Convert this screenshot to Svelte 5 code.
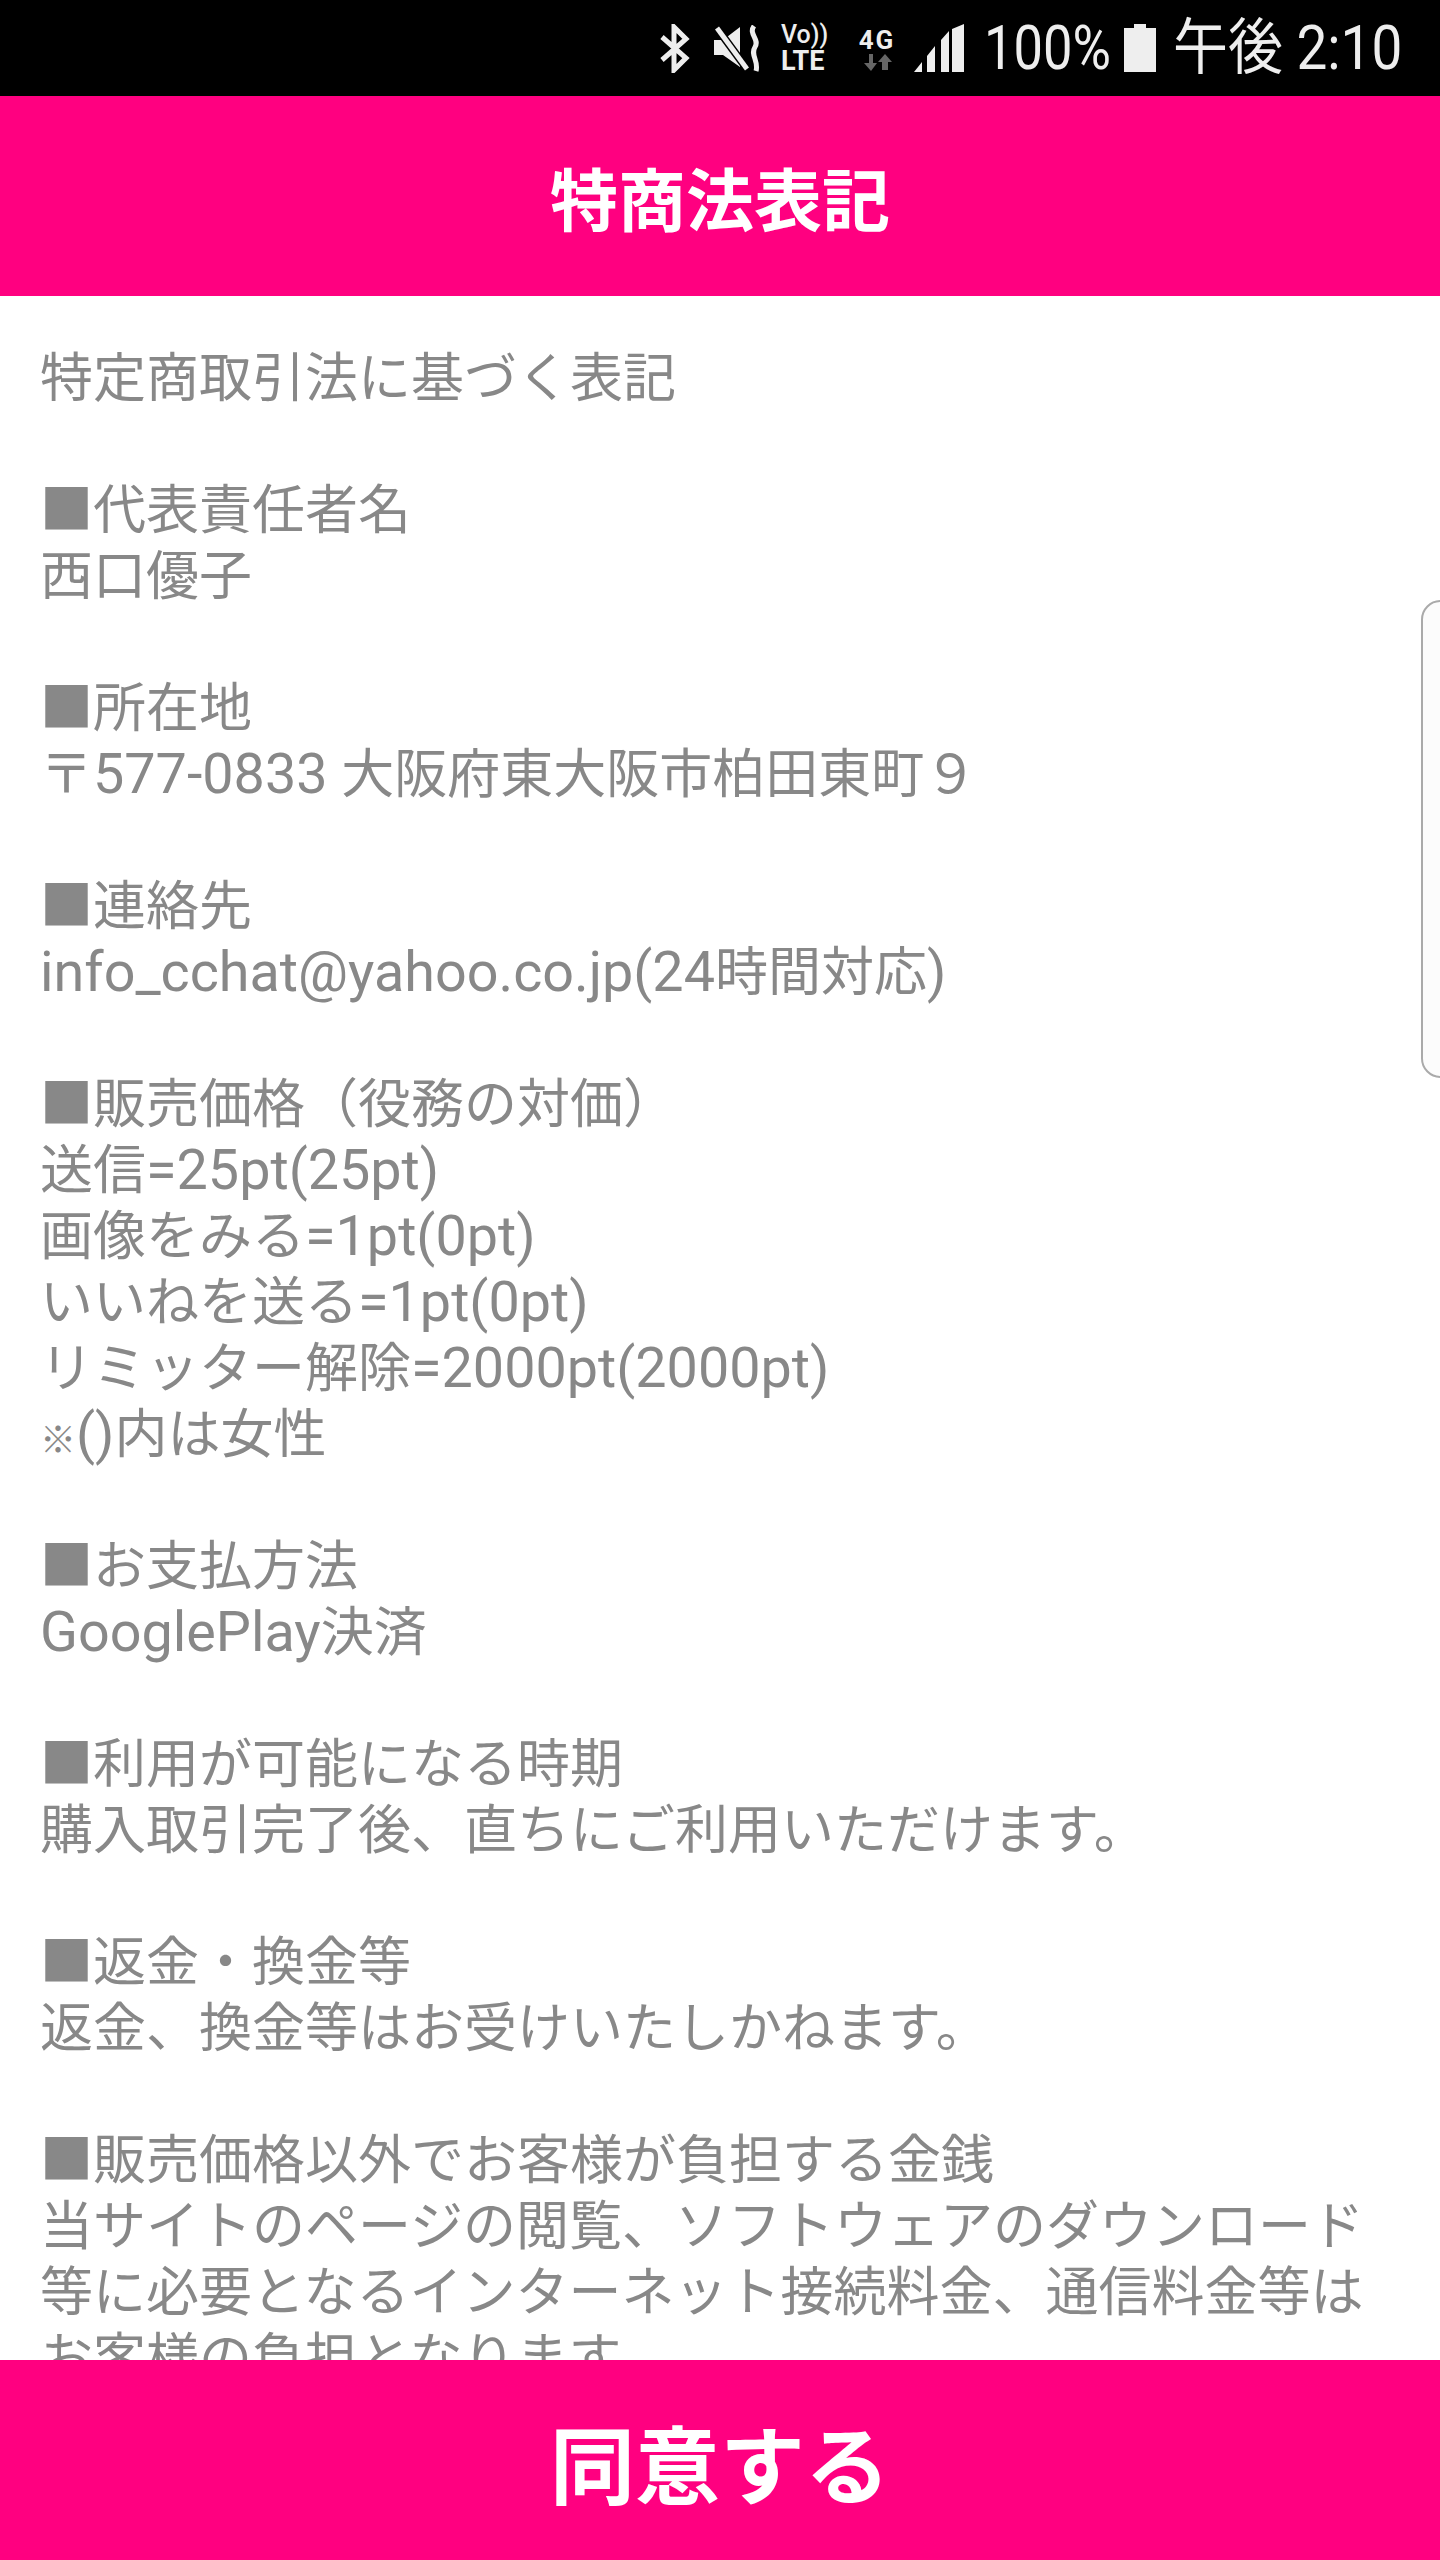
<script lang="ts">
	// 特商法表記 screen: status bar, title bar, scrolling legal text, agree button.
	const sections = [
		['特定商取引法に基づく表記'],
		['■代表責任者名', '西口優子'],
		['■所在地', '〒577-0833 大阪府東大阪市柏田東町９'],
		['■連絡先', 'info_cchat@yahoo.co.jp(24時間対応)'],
		['■販売価格（役務の対価）', '送信=25pt(25pt)', '画像をみる=1pt(0pt)', 'いいねを送る=1pt(0pt)', 'リミッター解除=2000pt(2000pt)', '※()内は女性'],
		['■お支払方法', 'GooglePlay決済'],
		['■利用が可能になる時期', '購入取引完了後、直ちにご利用いただけます。'],
		['■返金・換金等', '返金、換金等はお受けいたしかねます。'],
		['■販売価格以外でお客様が負担する金銭', '当サイトのページの閲覧、ソフトウェアのダウンロード等に必要となるインターネット接続料金、通信料金等はお客様の負担となります。']
	];

	// latin runs sit a bit larger than the kana/kanji around them, ※ a lot smaller
	function runs(line: string) {
		return line.split(/([\x21-\x7e][\x20-\x7e]*|※)/).filter(Boolean).map((text) => ({
			text,
			kind: text === '※' ? 'mark' : /^[\x21-\x7e]/.test(text) ? 'lat' : ''
		}));
	}
</script>

<div class="screen">
	<div class="status">
		<svg class="bt" viewBox="0 0 31 49" width="31" height="49">
			<path d="M3 13 L27 34 L15 46 V3 L27 15 L3 36" fill="none" stroke="#eee" stroke-width="5" />
		</svg>
		<svg class="mute" viewBox="0 0 47 47" width="47" height="47">
			<path d="M0 15 H9 L26 2 V42 L9 30 H0 Z" fill="#eee" />
			<path d="M3 3 L33 44" stroke="#000" stroke-width="8" />
			<path d="M3 3 L33 44" stroke="#eee" stroke-width="5" />
			<path d="M40 1 C34 9 46 14 41 22 C36 30 45 36 42 46" fill="none" stroke="#eee" stroke-width="5" />
		</svg>
		<div class="volte">
			<span class="vo">Vo))</span>
			<span>LTE</span>
		</div>
		<div class="net">
			<span>4G</span>
			<svg viewBox="0 0 29 17" width="29" height="17">
				<path d="M6 0 V9 H1 L8 17 L14 9 H10 V0 Z" fill="#666" />
				<path d="M22 0 L15 8 H19 V16 H25 V8 H29 Z" fill="#666" />
			</svg>
		</div>
		<svg class="signal" viewBox="0 0 50 48" width="50" height="48">
			<path d="M0 48 L8 38 V48 Z M13 48 V32 L21 22 V48 Z M27 48 V16 L35 7 V48 Z M38 48 V5 L50 0 V48 Z" fill="#eee" />
		</svg>
		<span class="pct"><span>100%</span></span>
		<svg class="batt" viewBox="0 0 32 48" width="32" height="48">
			<path d="M10 0 H22 V4 H32 V48 H0 V4 H10 Z" fill="#eee" />
		</svg>
		<span class="time"><span>午後 2:10</span></span>
	</div>

	<header class="head">特商法表記</header>

	<main class="body">
		{#each sections as lines}
			<section>
				{#each lines as line}
					<p>{#each runs(line) as run}<span class={run.kind}>{run.text}</span>{/each}</p>
				{/each}
			</section>
		{/each}
	</main>

	<footer class="agree">同意する</footer>

	<div class="edge"></div>
</div>

<style>
	:global(body) { margin: 0; background: #fff; }
	.screen {
		position: relative;
		width: 1440px;
		height: 2560px;
		display: flex;
		flex-direction: column;
		overflow: hidden;
		font-family: Roboto, "Noto Sans CJK JP", sans-serif;
	}
	.status {
		height: 96px;
		flex: 0 0 auto;
		background: #000;
		color: #eee;
		display: flex;
		align-items: center;
		justify-content: flex-end;
		padding-right: 38px;
	}
	.bt { margin-right: 24px; }
	.mute { margin-right: 20px; }
	.volte {
		display: flex;
		flex-direction: column;
		font-size: 27px;
		font-weight: 700;
		line-height: 26px;
		width: 47px;
		margin-right: 30px;
	}
	.vo { font-size: 25px; font-weight: 500; white-space: nowrap; }
	.net {
		display: flex;
		flex-direction: column;
		align-items: center;
		width: 38px;
		margin-right: 18px;
		font-size: 26px;
		font-weight: 700;
		letter-spacing: 2px;
		line-height: 28px;
	}
	.signal { margin-right: 20px; }
	.pct, .time { display: block; font-size: 61px; line-height: 70px; white-space: nowrap; }
	.pct { width: 125px; margin-right: 15px; }
	.time { width: 229px; }
	/* the clock and battery % use a condensed face on the device */
	.pct span, .time span { display: inline-block; transform-origin: left center; }
	.pct span { transform: scaleX(0.86); }
	.time span { transform: scaleX(0.9); }
	.batt { margin-right: 17px; }
	.head, .agree {
		flex: 0 0 auto;
		height: 200px;
		background: #ff0080;
		color: #fff;
		font-weight: 700;
		display: flex;
		align-items: center;
		justify-content: center;
	}
	.head { font-size: 68px; }
	.agree { font-size: 85px; }
	.body {
		flex: 1;
		min-height: 0;
		overflow: hidden;
		padding: 50px 40px 0;
		color: #888;
		font-size: 53px;
		line-height: 66px;
	}
	section { margin-bottom: 66px; }
	p { margin: 0; }
	.lat { font-size: 55.7px; line-height: 1; }
	.mark { font-size: 36px; font-weight: 500; line-height: 1; }
	.edge {
		position: absolute;
		right: -20px;
		top: 600px;
		width: 35px;
		height: 474px;
		border: 2px solid #aaa;
		border-radius: 20px;
		background: #fcfcfc;
	}
</style>
